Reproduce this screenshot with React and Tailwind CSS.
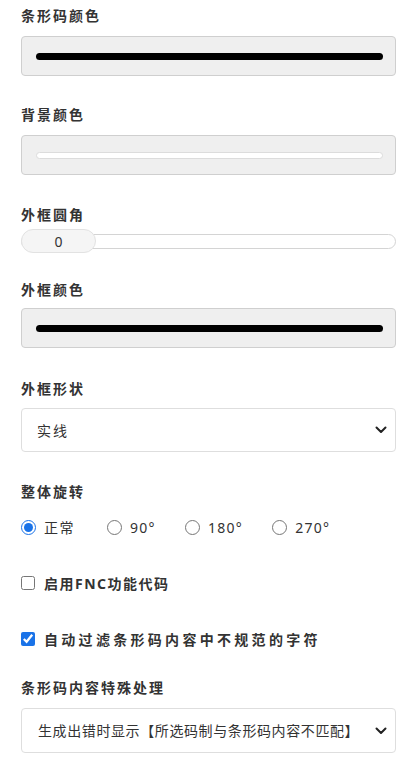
import { useState } from 'react';

function Label({ children, className = '' }) {
    return (
        <div className={`text-[14px] leading-5 font-bold text-[#333] tracking-[2px] ${className}`}>
            {children}
        </div>
    );
}

function ColorBox({ color, className = '' }) {
    return (
        <div className={`h-[40px] rounded-[4px] border border-[#cfcfcf] bg-[#efefef] flex items-center pl-[14px] pr-[12px] ${className}`}>
            <div
                className={`h-[7px] w-full rounded-full ${color === '#ffffff' ? 'border border-[#dcdcdc]' : ''}`}
                style={{ backgroundColor: color }}
            />
        </div>
    );
}

function Chevron() {
    return (
        <svg width="12" height="8" viewBox="0 0 12 8" className="absolute right-[9px] top-1/2 -translate-y-1/2 pointer-events-none">
            <path d="M1.5 1.5 L6 6 L10.5 1.5" fill="none" stroke="#222" strokeWidth="2" strokeLinecap="round" strokeLinejoin="round" />
        </svg>
    );
}

function Select({ value, options, onChange, className = '', h = 'h-[44px]', pl = 'pl-[15px]' }) {
    return (
        <div className={`relative ${className}`}>
            <select
                value={value}
                onChange={(e) => onChange(e.target.value)}
                className={`w-full ${h} appearance-none rounded-[4px] border border-[#dedede] bg-white ${pl} pr-8 text-[14px] text-[#333] outline-none`}
            >
                {options.map((o) => (
                    <option key={o} value={o}>{o}</option>
                ))}
            </select>
            <Chevron />
        </div>
    );
}

export default function App() {
    const [shape, setShape] = useState('实线');
    const [rotate, setRotate] = useState('0');
    const [fnc, setFnc] = useState(false);
    const [filter, setFilter] = useState(true);
    const [special, setSpecial] = useState('生成出错时显示【所选码制与条形码内容不匹配】');

    const rotations = [
        { v: '0', t: '正常', gap: 'mr-[32px]', tr: 'tracking-[1.5px]' },
        { v: '90', t: '90°', gap: 'mr-[29px]', tr: 'tracking-[1.3px]' },
        { v: '180', t: '180°', gap: 'mr-[29px]', tr: 'tracking-[1.3px]' },
        { v: '270', t: '270°', gap: '', tr: 'tracking-[1.3px]' },
    ];

    return (
        <div className="w-[416px] min-h-[778px] bg-white pl-[21px] pr-[20px] pt-[6px] font-['Noto_Sans','Noto_Sans_CJK_SC',sans-serif]">
            <Label>条形码颜色</Label>
            <ColorBox color="#000000" className="mt-[10px]" />

            <Label className="mt-[29px]">背景颜色</Label>
            <ColorBox color="#ffffff" className="mt-[10px]" />

            <Label className="mt-[30px]">外框圆角</Label>
            <div className="relative mt-[4px] h-[24px] flex items-center">
                <div className="h-[15px] w-full rounded-full border border-[#d4d4d4] bg-white" />
                <div className="absolute left-0 top-0 h-[24px] w-[75px] rounded-full border border-[#e2e2e2] bg-[#f5f5f5] flex items-center justify-center text-[14px] text-[#333]">
                    0
                </div>
            </div>

            <Label className="mt-[27px]">外框颜色</Label>
            <ColorBox color="#000000" className="mt-[8px]" />

            <Label className="mt-[31px]">外框形状</Label>
            <Select
                value={shape}
                onChange={setShape}
                options={['实线', '虚线', '点线']}
                className="mt-[9px] tracking-[2px]"
            />

            <Label className="mt-[30px]">整体旋转</Label>
            <div className="mt-[15px] flex items-center h-5 text-[14px] text-[#333]">
                {rotations.map((r) => (
                    <label key={r.v} className={`flex items-center ${r.gap}`}>
                        <input
                            type="radio"
                            name="rotate"
                            checked={rotate === r.v}
                            onChange={() => setRotate(r.v)}
                            className="m-0 h-[15px] w-[15px] accent-[#1a73e8]"
                        />
                        <span className={`ml-[8px] ${r.tr}`}>{r.t}</span>
                    </label>
                ))}
            </div>

            <label className="mt-[36px] flex items-center h-5">
                <input
                    type="checkbox"
                    checked={fnc}
                    onChange={(e) => setFnc(e.target.checked)}
                    className="m-0 h-[14px] w-[14px]"
                />
                <span className="ml-[9px] text-[14px] font-bold text-[#333] tracking-[1.5px]">启用FNC功能代码</span>
            </label>

            <label className="mt-[36px] flex items-center h-5">
                <input
                    type="checkbox"
                    checked={filter}
                    onChange={(e) => setFilter(e.target.checked)}
                    className="m-0 h-[14px] w-[14px] accent-[#1a73e8]"
                />
                <span className="ml-[9px] text-[14px] font-bold text-[#333] tracking-[3.3px]">自动过滤条形码内容中不规范的字符</span>
            </label>

            <Label className="mt-[29px]">条形码内容特殊处理</Label>
            <Select
                value={special}
                onChange={setSpecial}
                options={['生成出错时显示【所选码制与条形码内容不匹配】', '生成出错时不显示']}
                className="mt-[10px] tracking-[0.6px]"
                h="h-[45px]"
                pl="pl-[16px]"
            />
        </div>
    );
}
